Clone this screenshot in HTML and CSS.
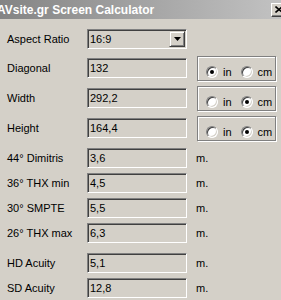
FILE: index.html
```html
<!DOCTYPE html>
<html lang="en">
<head>
    <meta charset="UTF-8">
    <title>AVsite.gr Screen Calculator</title>
    <link rel="stylesheet" href="styles.css">
</head>
<body>
    <div class="window">
        <div class="titlebar">
            <span class="title">AVsite.gr Screen Calculator</span>
            <span class="close-btn">
                <svg width="8" height="7" viewBox="0 0 8 7"><path d="M0.5 0.5 L7.5 6.5 M7.5 0.5 L0.5 6.5" stroke="#000" stroke-width="1.6"/></svg>
            </span>
        </div>

        <div class="content">
            <!-- Screen size -->
            <div class="group group-size">
                <div class="row row-select">
                    <span class="label">Aspect Ratio</span>
                    <div class="select">
                        <span class="select-value">16:9</span>
                        <span class="select-btn">
                            <svg width="7" height="4" viewBox="0 0 7 4"><polygon points="0,0 7,0 3.5,4" fill="#000"/></svg>
                        </span>
                    </div>
                </div>
                <div class="row row-radio">
                    <span class="label">Diagonal</span>
                    <div class="field">132</div>
                    <div class="unit-box">
                        <span class="radio checked"></span><span class="radio-label">in</span>
                        <span class="radio second"></span><span class="radio-label">cm</span>
                    </div>
                </div>
                <div class="row row-radio">
                    <span class="label">Width</span>
                    <div class="field">292,2</div>
                    <div class="unit-box">
                        <span class="radio"></span><span class="radio-label">in</span>
                        <span class="radio second checked"></span><span class="radio-label">cm</span>
                    </div>
                </div>
                <div class="row row-radio">
                    <span class="label">Height</span>
                    <div class="field">164,4</div>
                    <div class="unit-box">
                        <span class="radio"></span><span class="radio-label">in</span>
                        <span class="radio second checked"></span><span class="radio-label">cm</span>
                    </div>
                </div>
            </div>

            <!-- Viewing distances -->
            <div class="group group-distance">
                <div class="row">
                    <span class="label">44° Dimitris</span>
                    <div class="field">3,6</div>
                    <span class="unit">m.</span>
                </div>
                <div class="row">
                    <span class="label">36° THX min</span>
                    <div class="field">4,5</div>
                    <span class="unit">m.</span>
                </div>
                <div class="row">
                    <span class="label">30° SMPTE</span>
                    <div class="field">5,5</div>
                    <span class="unit">m.</span>
                </div>
                <div class="row">
                    <span class="label">26° THX max</span>
                    <div class="field">6,3</div>
                    <span class="unit">m.</span>
                </div>
            </div>

            <!-- Acuity -->
            <div class="group group-acuity">
                <div class="row">
                    <span class="label">HD Acuity</span>
                    <div class="field">5,1</div>
                    <span class="unit">m.</span>
                </div>
                <div class="row">
                    <span class="label">SD Acuity</span>
                    <div class="field">12,8</div>
                    <span class="unit">m.</span>
                </div>
            </div>
        </div>
    </div>
</body>
</html>
```

FILE: styles.css
```css
html, body {
    margin: 0;
    overflow: hidden;
}
body {
    background-color: #d4d0c8;
    font-family: "Liberation Sans", Arial, sans-serif;
    font-size: 11px;
    color: #000;
}
.window {
    width: 290px;
    height: 300px;
}
.titlebar {
    height: 19px;
    display: flex;
    align-items: center;
    background: linear-gradient(to right, #848484, #c4c4c4);
}
.title {
    margin-left: -3px;
    color: #fff;
    font-weight: bold;
    font-size: 12px;
}
.close-btn {
    margin-left: auto;
    margin-right: 3px;
    width: 16px;
    height: 14px;
    box-sizing: border-box;
    display: flex;
    align-items: center;
    justify-content: center;
    background-color: #d4d0c8;
    border: 1px solid;
    border-color: #fff #404040 #404040 #fff;
    box-shadow: inset -1px -1px #808080;
}
.content {
    padding: 10px 0 0 7px;
}
.group-size {
    margin-bottom: 7px;
}
.group-distance {
    margin-bottom: 10px;
}
.row {
    display: flex;
    align-items: center;
    height: 20px;
    margin-bottom: 5px;
}
.row-select {
    margin-bottom: 6px;
}
.row-radio {
    height: 26px;
    margin-bottom: 4px;
}
.group .row:last-child {
    margin-bottom: 0;
}
.label {
    width: 80px;
}
.field,
.select {
    width: 100px;
    height: 20px;
    box-sizing: border-box;
    padding-left: 2px;
    line-height: 18px;
    border: 1px solid;
    border-color: #808080 #fff #fff #808080;
    box-shadow: inset 1px 1px #404040, inset -1px -1px #d4d0c8;
}
.select {
    display: flex;
    align-items: center;
}
.select-btn {
    margin-left: auto;
    margin-right: 1px;
    width: 16px;
    height: 16px;
    box-sizing: border-box;
    display: flex;
    align-items: center;
    justify-content: center;
    background-color: #d4d0c8;
    border: 1px solid;
    border-color: #d4d0c8 #404040 #404040 #d4d0c8;
    box-shadow: inset 1px 1px #fff, inset -1px -1px #808080;
}
.unit {
    margin-left: 9px;
}
.unit-box {
    margin-left: 10px;
    width: 79px;
    height: 25px;
    box-sizing: border-box;
    padding: 8px 0 0 8px;
    display: flex;
    align-items: center;
    border: 1px solid #808080;
    box-shadow: inset 1px 1px #fff, 1px 1px #fff;
}
.radio {
    position: relative;
    width: 12px;
    height: 12px;
    box-sizing: border-box;
    border-radius: 50%;
    background-color: #fff;
    border: 1px solid;
    border-color: #808080 #fff #fff #808080;
    box-shadow: inset 1px 1px #404040, inset -1px -1px #d4d0c8;
}
.radio.second {
    margin-left: 9px;
}
.radio.checked::after {
    content: "";
    position: absolute;
    left: 3px;
    top: 3px;
    width: 4px;
    height: 4px;
    border-radius: 50%;
    background-color: #000;
}
.radio-label {
    margin-left: 5px;
}
```
